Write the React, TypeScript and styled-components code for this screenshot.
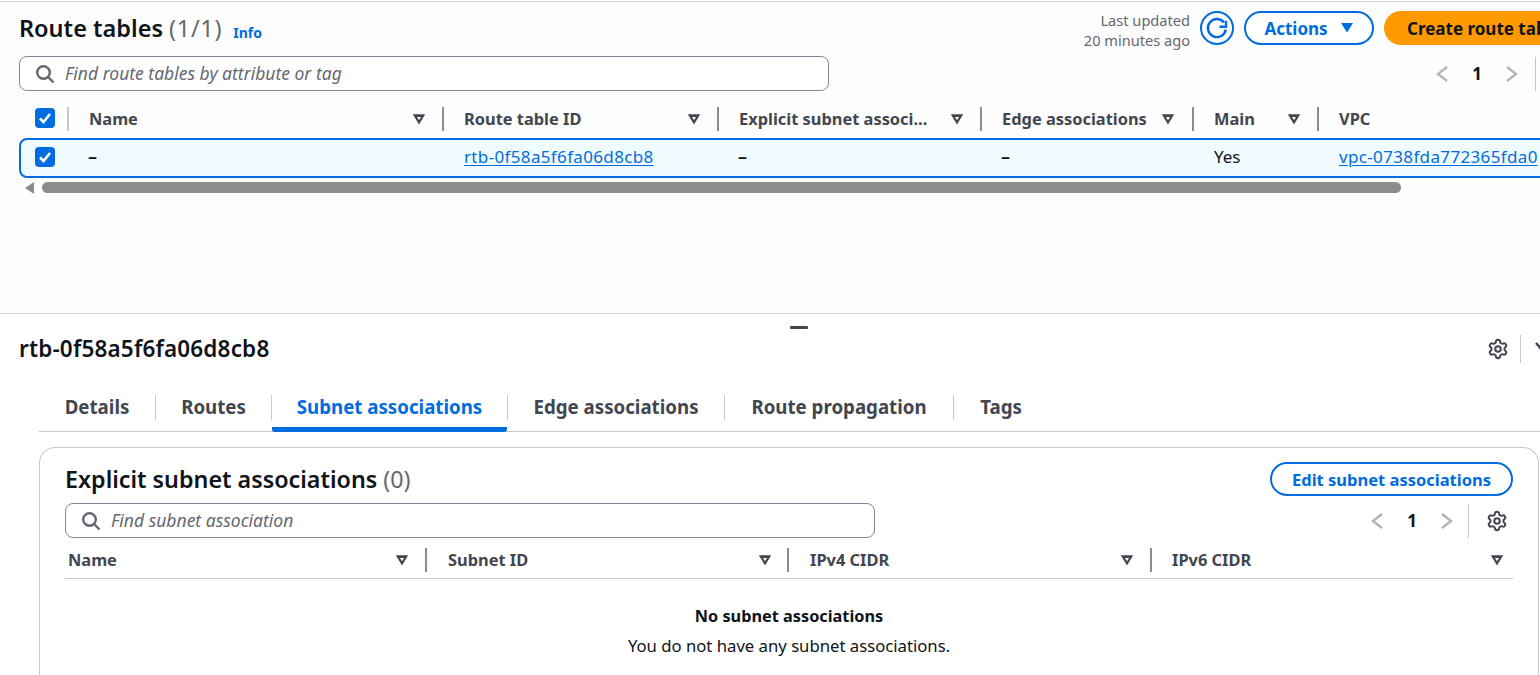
import React from "react";
import styled, { createGlobalStyle } from "styled-components";
import { Settings } from "lucide-react";

const Global = createGlobalStyle`
  html, body { margin: 0; padding: 0; background: #fff; }
  body { font-family: "Noto Sans", "Open Sans", sans-serif; color: #0f141a; overflow: hidden; }
  #root { width: 1540px; height: 675px; overflow: hidden; }
`;

const Page = styled.div`
  width: 1540px;
  height: 675px;
  overflow: hidden;
  display: flex;
  flex-direction: column;
`;
const TopPane = styled.section`
  height: 313px;
  flex: none;
  box-sizing: border-box;
  margin-top: 1px;
  border-top: 1px solid #d5d5d5;
  border-bottom: 1px solid #d5d5d5;
  background: #fdfdfd;
  padding: 0 0 0 19px;
  overflow: hidden;
`;
const TitleBar = styled.div`
  display: flex;
  align-items: flex-start;
  justify-content: space-between;
  height: 54px;
  width: 1541px;
`;
const TitleGroup = styled.div`
  display: flex;
  align-items: flex-start;
  padding-top: 10px;
`;
const PageTitle = styled.h1`
  margin: 0;
  font-size: 23.5px;
  line-height: 32px;
  font-weight: 600;
  color: #0f141a;
`;
const Count = styled.span<{ $track?: number }>`
  font-weight: 400;
  color: #656871;
  margin-left: 6px;
  letter-spacing: ${(p) => p.$track ?? 0}px;
`;
const InfoLink = styled.a`
  font-size: 14px;
  font-weight: 700;
  color: #006ce0;
  margin: 11px 0 0 11px;
`;
const Actions = styled.div`
  display: flex;
  align-items: flex-start;
  padding-top: 9px;
`;
const Updated = styled.div`
  font-size: 14.6px;
  line-height: 20px;
  color: #656871;
  text-align: right;
  margin: -1px 10px 0 0;
`;
const RefreshButton = styled.button`
  width: 34px;
  height: 34px;
  box-sizing: border-box;
  border-radius: 50%;
  border: 2px solid #006ce0;
  background: #fff;
  padding: 0;
  display: flex;
  align-items: center;
  justify-content: center;
  margin-right: 10px;
`;
const OutlineButton = styled.button<{ $w?: number }>`
  height: 34px;
  ${(p) => (p.$w ? `width: ${p.$w}px;` : "")}
  box-sizing: border-box;
  border: 2px solid #006ce0;
  border-radius: 17px;
  background: #fff;
  color: #006ce0;
  font: 700 16.5px "Noto Sans", sans-serif;
  display: flex;
  align-items: center;
  justify-content: center;
  padding: 0;
  white-space: nowrap;
`;
const ActionsButton = styled(OutlineButton)`
  width: 130px;
  font-size: 17px;
  gap: 12px;
  margin-right: 10px;
`;
const PrimaryButton = styled.button`
  height: 34px;
  width: 176px;
  flex: none;
  border: 0;
  border-radius: 17px;
  background: #ff9900;
  color: #0f141a;
  font: 700 17px "Noto Sans", sans-serif;
  text-align: left;
  padding: 0 0 0 23px;
  white-space: nowrap;
`;
const SearchRow = styled.div`
  display: flex;
  align-items: center;
  height: 35px;
`;
const SearchBox = styled.div`
  width: 810px;
  height: 35px;
  flex: none;
  box-sizing: border-box;
  border: 1px solid #7d8998;
  border-radius: 8px;
  background: #fff;
  display: flex;
  align-items: center;
  padding: 0 0 2px 15px;
  gap: 10px;
  font-size: 17.5px;
  font-style: italic;
  color: #656871;
`;
const Pager = styled.div`
  display: flex;
  align-items: center;
  margin-left: auto;
  flex: none;
`;
const PageNum = styled.span`
  font-size: 17px;
  font-weight: 700;
  color: #0f141a;
  width: 56px;
  text-align: center;
`;
const TopPager = styled(Pager)`
  margin-left: 606px;
`;
const VRule = styled.span<{ $h: number }>`
  width: 1px;
  height: ${(p) => p.$h}px;
  background: #c6c6cd;
  flex: none;
`;
const PagerRule = styled(VRule)<{ $gap: number }>`
  margin-left: ${(p) => p.$gap}px;
`;
const TopGrid = "48px 375px 275px 263px 212px 125px 300px";
const HeadRow = styled.div<{ $cols: string }>`
  display: grid;
  grid-template-columns: ${(p) => p.$cols};
  align-items: center;
`;
const TopHead = styled(HeadRow)`
  height: 47px;
  padding-top: 9px;
  box-sizing: border-box;
  width: 1600px;
`;
const CheckCell = styled.div`
  padding: 0 0 2px 16px;
  display: flex;
  align-items: center;
`;
const HeadCell = styled.div<{ $rule?: boolean; $pad?: number; $caret?: number }>`
  height: 24px;
  box-sizing: border-box;
  display: flex;
  align-items: center;
  justify-content: space-between;
  border-left: ${(p) => (p.$rule === false ? "0" : "2px solid #8c8c94")};
  padding-left: ${(p) => p.$pad ?? 19}px;
  padding-right: ${(p) => p.$caret ?? 16}px;
  padding-bottom: 2px;
  font-size: 16.4px;
  font-weight: 700;
  color: #424650;
  white-space: nowrap;
`;
const FirstRule = styled(HeadCell)`
  border-left-color: #c6c6cd;
`;
const SelectedRow = styled.div`
  display: grid;
  grid-template-columns: ${TopGrid};
  align-items: center;
  box-sizing: border-box;
  height: 40px;
  width: 1600px;
  padding-bottom: 2px;
  border: 2px solid #006ce0;
  border-radius: 8px;
  background: #f0fbff;
  font-size: 17px;
  color: #0f141a;
`;
const BodyCheck = styled.div`
  padding-left: 14px;
  display: flex;
  align-items: center;
`;
const BodyCell = styled.div`
  padding: 0 0 2px 20px;
  white-space: nowrap;
`;
const DashCell = styled(BodyCell)`
  font-weight: 600;
  font-size: 18px;
  padding-left: 19px;
`;
const TableLink = styled.a`
  color: #006ce0;
  letter-spacing: 0.35px;
  text-decoration: underline;
  text-underline-offset: 2px;
  text-decoration-thickness: 1px;
`;
const Scrollbar = styled.div`
  display: flex;
  align-items: center;
  height: 11px;
  margin-top: 4px;
  padding-left: 6px;
`;
const ScrollThumb = styled.div`
  width: 1359px;
  height: 11px;
  border-radius: 6px;
  background: #8c8c8c;
  margin-left: 8px;
`;
const Handle = styled.div`
  height: 23px;
  display: flex;
  align-items: flex-start;
  justify-content: center;
  padding: 12px 0 0 58px;
  box-sizing: border-box;
  flex: none;
`;
const HandleBar = styled.span`
  width: 18px;
  height: 3px;
  background: #424650;
  border-radius: 1px;
`;
const DetailHeader = styled.div`
  display: flex;
  align-items: center;
  justify-content: space-between;
  padding-left: 19px;
  height: 24px;
  width: 1550px;
  flex: none;
  box-sizing: border-box;
`;
const DetailTitle = styled.h2`
  margin: 0;
  font-size: 22.5px;
  letter-spacing: 0.17px;
  line-height: 24px;
  font-weight: 600;
  color: #0f141a;
`;
const DetailTools = styled.div`
  display: flex;
  align-items: center;
  gap: 11px;
  flex: none;
`;
const IconSlot = styled.span`
  display: flex;
  color: #424650;
`;
const CollapseIcon = styled.svg`
  margin: 0 0 4px 2px;
  flex: none;
`;
const Tabs = styled.nav`
  display: flex;
  align-items: stretch;
  margin: 23px 0 0 39px;
  height: 48px;
  flex: none;
  box-sizing: border-box;
  border-bottom: 1px solid #c6c6cd;
`;
const Tab = styled.div<{ $active?: boolean; $w: number }>`
  width: ${(p) => p.$w}px;
  box-sizing: border-box;
  flex: none;
  display: flex;
  align-items: center;
  justify-content: center;
  height: 48px;
  font-size: 18.7px;
  font-weight: 700;
  color: ${(p) => (p.$active ? "#006ce0" : "#424650")};
  border-bottom: 5px solid ${(p) => (p.$active ? "#006ce0" : "transparent")};
  border-radius: 0 0 3px 3px;
  padding-top: 2px;
`;
const TabRule = styled.span`
  width: 1px;
  height: 25px;
  background: #c6c6cd;
  flex: none;
  margin-top: 11px;
`;
const Card = styled.section`
  margin: 15px 1px 0 39px;
  height: 240px;
  flex: none;
  box-sizing: border-box;
  border: 1px solid #c6c6cd;
  border-bottom: 0;
  border-radius: 16px 16px 0 0;
  padding: 13px 25px 0 25px;
  background: #fff;
`;
const CardHead = styled.div`
  display: flex;
  align-items: center;
  justify-content: space-between;
  height: 36px;
`;
const CardTitle = styled.h2`
  margin: 0;
  font-size: 23.3px;
  line-height: 36px;
  font-weight: 600;
  color: #0f141a;
`;
const CardSearchRow = styled(SearchRow)`
  margin-top: 6px;
`;
const CardPager = styled(Pager)`
  height: 35px;
  padding-right: 5px;
`;
const GearSlot = styled(IconSlot)`
  margin-left: 17px;
`;
const SubHead = styled(HeadRow)`
  height: 41px;
  box-sizing: border-box;
  border-bottom: 1px solid #c6c6cd;
  padding-top: 4px;
`;
const Empty = styled.div`
  text-align: center;
  padding-top: 22px;
  font-size: 16.7px;
  line-height: 30px;
  color: #0f141a;
`;
const EmptyTitle = styled.div`
  font-weight: 700;
  font-size: 16.3px;
`;
const CaretIcon = styled.svg`
  flex: none;
  margin-top: 2px;
`;
const SearchGlyph = styled.svg`
  flex: none;
  margin-top: 2px;
`;

const Check = () => (
  <svg width="20" height="20" viewBox="0 0 20 20">
    <rect width="20" height="20" rx="4" fill="#006ce0" />
    <path d="M5 10.5 8.5 14 15 6" fill="none" stroke="#fff" strokeWidth="2.6" />
  </svg>
);
const Caret = () => (
  <CaretIcon width="14" height="12" viewBox="0 0 14 12">
    <path d="M.8 1.2h12.4L7 11.4z" fill="#424650" />
    <path d="M5 4h4L7 7.2z" fill="#fff" />
  </CaretIcon>
);
const SearchIcon = () => (
  <SearchGlyph width="20" height="20" viewBox="0 0 20 20" fill="none" stroke="#656871" strokeWidth="2.4">
    <circle cx="8.5" cy="8.5" r="6.3" />
    <path d="M13.2 13.2 18.5 18.5" />
  </SearchGlyph>
);
const Chevron = ({ dir }: { dir: "l" | "r" }) => (
  <svg width="14" height="18" viewBox="0 0 14 18" fill="none" stroke="#b4b4bb" strokeWidth="2.4">
    <path d={dir === "l" ? "M12 2 3 9l9 7" : "M2 2l9 7-9 7"} />
  </svg>
);
const Gear = () => <Settings size={22} strokeWidth={2.2} />;

export default function App() {
  return (
    <Page>
      <Global />
      <TopPane>
        <TitleBar>
          <TitleGroup>
            <PageTitle>
              Route tables<Count $track={0.7}>(1/1)</Count>
            </PageTitle>
            <InfoLink>Info</InfoLink>
          </TitleGroup>
          <Actions>
            <Updated>
              Last updated
              <br />
              20 minutes ago
            </Updated>
            <RefreshButton aria-label="Refresh">
              <svg width="24" height="24" viewBox="0 0 24 24" fill="none" stroke="#006ce0" strokeWidth="2.4">
                <path d="M20.8 13.5A9 9 0 1 1 19 6.5" />
                <path d="M21 4.7V10.7H14.5" />
              </svg>
            </RefreshButton>
            <ActionsButton>
              Actions
              <svg width="14" height="10" viewBox="0 0 14 10">
                <path d="M1 0h12L7 9.5z" fill="#006ce0" />
              </svg>
            </ActionsButton>
            <PrimaryButton>Create route table</PrimaryButton>
          </Actions>
        </TitleBar>
        <SearchRow>
          <SearchBox>
            <SearchIcon />
            Find route tables by attribute or tag
          </SearchBox>
          <TopPager>
            <Chevron dir="l" />
            <PageNum>1</PageNum>
            <Chevron dir="r" />
            <PagerRule $h={34} $gap={16} />
          </TopPager>
        </SearchRow>
        <TopHead $cols={TopGrid}>
          <CheckCell>
            <Check />
          </CheckCell>
          <FirstRule $pad={20}>
            Name
            <Caret />
          </FirstRule>
          <HeadCell $pad={20}>
            Route table ID
            <Caret />
          </HeadCell>
          <HeadCell $pad={20}>
            Explicit subnet associ...
            <Caret />
          </HeadCell>
          <HeadCell $pad={20} $caret={17}>
            Edge associations
            <Caret />
          </HeadCell>
          <HeadCell $pad={20}>
            Main
            <Caret />
          </HeadCell>
          <HeadCell $pad={20}>VPC</HeadCell>
        </TopHead>
        <SelectedRow>
          <BodyCheck>
            <Check />
          </BodyCheck>
          <DashCell>–</DashCell>
          <BodyCell>
            <TableLink>rtb-0f58a5f6fa06d8cb8</TableLink>
          </BodyCell>
          <DashCell>–</DashCell>
          <DashCell>–</DashCell>
          <BodyCell>Yes</BodyCell>
          <BodyCell>
            <TableLink>vpc-0738fda772365fda0</TableLink>
          </BodyCell>
        </SelectedRow>
        <Scrollbar>
          <svg width="9" height="12" viewBox="0 0 9 12">
            <path d="M9 0v12L0 6z" fill="#8c8c8c" />
          </svg>
          <ScrollThumb />
        </Scrollbar>
      </TopPane>
      <Handle>
        <HandleBar />
      </Handle>
      <DetailHeader>
        <DetailTitle>rtb-0f58a5f6fa06d8cb8</DetailTitle>
        <DetailTools>
          <IconSlot>
            <Gear />
          </IconSlot>
          <VRule $h={28} />
          <CollapseIcon width="16" height="10" viewBox="0 0 16 10" fill="none" stroke="#424650" strokeWidth="2.4">
            <path d="M2 1l6 7 6-7" />
          </CollapseIcon>
        </DetailTools>
      </DetailHeader>
      <Tabs>
        <Tab $w={116}>Details</Tab>
        <TabRule />
        <Tab $w={115}>Routes</Tab>
        <TabRule />
        <Tab $w={235} $active>
          Subnet associations
        </Tab>
        <TabRule />
        <Tab $w={216}>Edge associations</Tab>
        <TabRule />
        <Tab $w={228}>Route propagation</Tab>
        <TabRule />
        <Tab $w={94}>Tags</Tab>
      </Tabs>
      <Card>
        <CardHead>
          <CardTitle>
            Explicit subnet associations<Count>(0)</Count>
          </CardTitle>
          <OutlineButton $w={243}>Edit subnet associations</OutlineButton>
        </CardHead>
        <CardSearchRow>
          <SearchBox>
            <SearchIcon />
            Find subnet association
          </SearchBox>
          <CardPager>
            <Chevron dir="l" />
            <PageNum>1</PageNum>
            <Chevron dir="r" />
            <PagerRule $h={34} $gap={14} />
            <GearSlot>
              <Gear />
            </GearSlot>
          </CardPager>
        </CardSearchRow>
        <SubHead $cols="360px 362px 363px 1fr">
          <HeadCell $rule={false} $pad={3} $caret={16}>
            Name
            <Caret />
          </HeadCell>
          <HeadCell $pad={21} $caret={15}>
            Subnet ID
            <Caret />
          </HeadCell>
          <HeadCell $pad={21} $caret={16}>
            IPv4 CIDR
            <Caret />
          </HeadCell>
          <HeadCell $pad={20} $caret={9}>
            IPv6 CIDR
            <Caret />
          </HeadCell>
        </SubHead>
        <Empty>
          <EmptyTitle>No subnet associations</EmptyTitle>
          You do not have any subnet associations.
        </Empty>
      </Card>
    </Page>
  );
}
